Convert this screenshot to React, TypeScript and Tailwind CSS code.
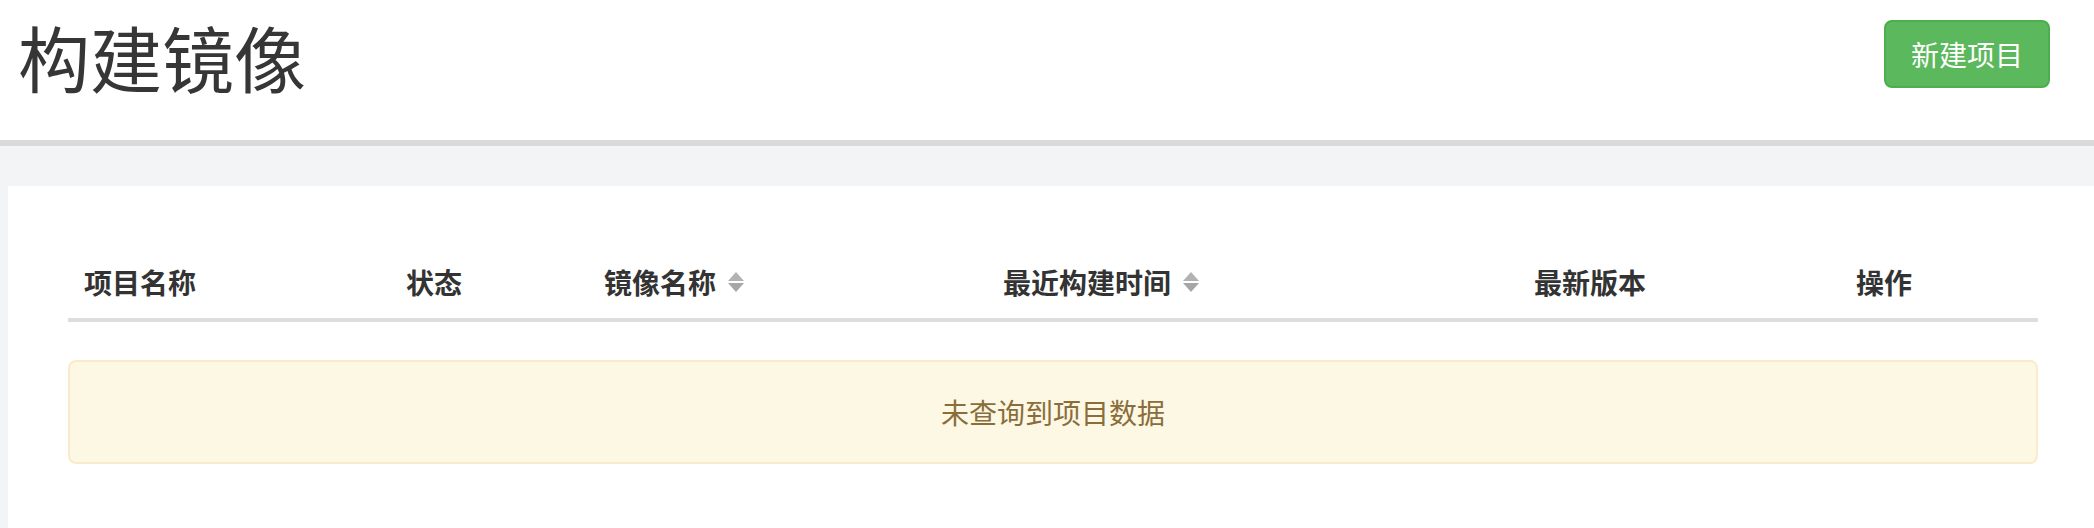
import React from 'react';

const columns = [
    { label: '项目名称', width: 'w-[322px]', sortable: false },
    { label: '状态', width: 'w-[198px]', sortable: false },
    { label: '镜像名称', width: 'w-[399px]', sortable: true },
    { label: '最近构建时间', width: 'w-[531px]', sortable: true },
    { label: '最新版本', width: 'w-[322px]', sortable: false },
    { label: '操作', width: 'w-[198px]', sortable: false },
];

// Up/down carets next to sortable headers
const SortIcon = () => (
    <svg width="16" height="20" viewBox="0 0 16 20" className="ml-[12px] shrink-0">
        <polygon points="8,0 16,9 0,9" fill="#b2b2b2" />
        <polygon points="0,11 16,11 8,20" fill="#a6a6a6" />
    </svg>
);

export default function App() {
    return (
        <div className="min-h-screen bg-[#f3f4f6] font-['Noto_Sans_CJK_SC','Noto_Sans',sans-serif] text-[#333]">
            <header className="h-[146px] bg-white border-b-[6px] border-[#dadada] flex justify-between items-start pl-[18px] pr-[44px]">
                <h1 className="mt-[16px] text-[72px] leading-[80px] font-normal text-[#363636]">构建镜像</h1>
                <button className="mt-[20px] w-[166px] h-[68px] rounded-[8px] bg-[#5cb85c] border-2 border-[#4cae4c] text-white text-[28px] leading-none flex items-center justify-center">
                    新建项目
                </button>
            </header>

            <div className="pt-[40px] pl-[8px]">
                <div className="bg-white min-h-[342px] pt-[60px] pl-[60px] pr-[56px]">
                    <div className="flex h-[76px] items-center border-b-4 border-[#dddddd]">
                        {columns.map((col) => (
                            <div key={col.label} className={`${col.width} pl-[16px] flex items-center text-[28px] font-bold leading-[40px] text-[#333]`}>
                                <span>{col.label}</span>
                                {col.sortable && <SortIcon />}
                            </div>
                        ))}
                    </div>

                    <div className="mt-[38px] h-[104px] rounded-[8px] border-2 border-[#faebcc] bg-[#fcf8e3] flex items-center justify-center text-[28px] text-[#8a6d3b]">
                        未查询到项目数据
                    </div>
                </div>
            </div>
        </div>
    );
}
